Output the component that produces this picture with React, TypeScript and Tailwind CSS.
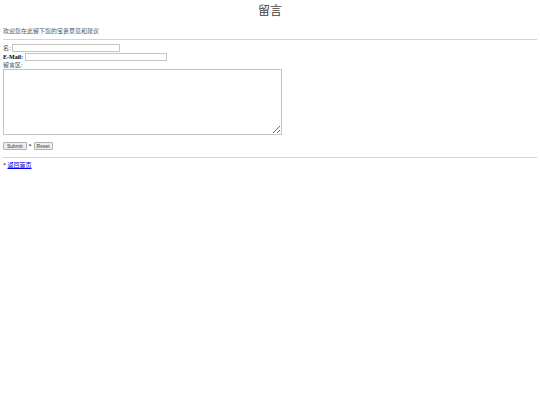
export default function App() {
  return (
    <div className="min-h-[405px] w-[540px] bg-white px-[3px] text-black [font-family:'Liberation_Serif','Noto_Sans_CJK_SC',serif]">
      <h1 className="pt-[4px] text-center text-[12px] leading-[14px] font-normal text-[#444]">留言</h1>

      <p className="mt-[10px] text-[6px] leading-[7px] text-[#555]">欢迎您在此留下您的宝贵意见和建议</p>

      <hr className="mt-[4px] border-t border-[#d4d4d4]" />

      <form className="mt-[4px] flex flex-col" onSubmit={(event) => event.preventDefault()}>
        <div className="flex h-[8px] items-center gap-[1px] text-[6px] leading-[7px]">
          <label htmlFor="name" className="text-[#555]">名:</label>
          <input id="name" className="h-[8px] w-[108px] border border-[#c4c4c4] bg-white" />
        </div>

        <div className="mt-[1px] flex h-[8px] items-center gap-[2px] text-[6px] leading-[7px]">
          <label htmlFor="email" className="font-bold">E-Mail:</label>
          <input id="email" className="h-[8px] w-[142px] border border-[#c4c4c4] bg-white" />
        </div>

        <label htmlFor="message" className="mt-[1px] text-[6px] leading-[7px] text-[#555]">留言区:</label>
        <textarea
          id="message"
          className="h-[66px] w-[279px] border border-[#c4c4c4] bg-white"
        />

        <div className="mt-[7px] flex items-center gap-[2px] text-[6px] leading-[7px]">
          <button
            type="submit"
            className="h-[8px] rounded-[1px] border border-[#b0b0b0] bg-[#efefef] px-[3px] text-[5px] leading-[6px] text-[#333] [font-family:'Liberation_Sans',sans-serif]"
          >
            Submit
          </button>
          <span>*</span>
          <button
            type="reset"
            className="h-[8px] rounded-[1px] border border-[#b0b0b0] bg-[#efefef] px-[2px] text-[5px] leading-[6px] text-[#333] [font-family:'Liberation_Sans',sans-serif]"
          >
            Reset
          </button>
        </div>
      </form>

      <hr className="mt-[7px] border-t border-[#d4d4d4]" />

      <p className="mt-[4px] text-[6px] leading-[7px]">
        * <a href="#" className="text-[#0000ee] underline">返回首页</a>
      </p>
    </div>
  );
}
